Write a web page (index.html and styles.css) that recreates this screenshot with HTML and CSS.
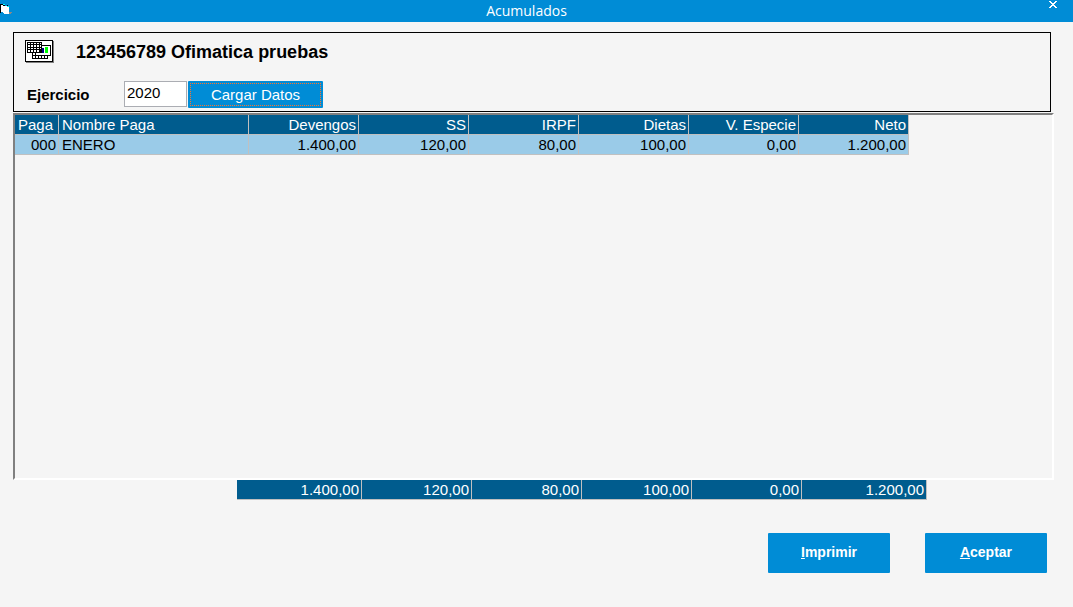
FILE: index.html
```html
<!DOCTYPE html>
<html lang="es">
<head>
<meta charset="utf-8">
<title>Acumulados</title>
<link rel="stylesheet" href="styles.css">
</head>
<body>
<header class="titlebar">
  <svg class="app-icon" width="12" height="11" viewBox="0 0 12 11" shape-rendering="crispEdges" aria-hidden="true">
    <path fill="#000" d="M0 0h3v1h-3zM0 1h1v8h-1zM3 1h2v1h-2zM7 1h1v1h-1z"/>
    <path fill="#0ff" d="M3 0h2v1h-2zM7 2h2v1h-2z"/>
    <path fill="#fff" d="M1 1h2v7h-2zM3 2h4v7h-4zM7 3h2v6h-2zM4 9h5v1h-5z"/>
    <path fill="#888" d="M9 8h3v1h-1v1h-2z"/>
  </svg>
  <h1 class="title">Acumulados</h1>
  <button class="close" type="button" aria-label="Cerrar">
    <svg width="9" height="7" viewBox="0 0 9 7" shape-rendering="crispEdges" aria-hidden="true">
      <path fill="#fff" d="M0 0h2v1h-2zM6 0h2v1h-2zM1 1h2v1h-2zM5 1h2v1h-2zM2 2h4v1h-4zM3 3h2v1h-2zM2 4h4v1h-4zM1 5h2v1h-2zM5 5h2v1h-2zM0 6h2v1h-2zM6 6h2v1h-2z"/>
    </svg>
  </button>
</header>
<main class="content">
  <form class="filter">
    <div class="company">
      <svg class="company-icon" width="29" height="23" viewBox="0 0 29 23" shape-rendering="crispEdges" aria-hidden="true">
        <path fill="#808080" d="M1 1h28v22h-28z"/>
        <path fill="#000" d="M0 0h28v22h-28z"/>
        <path fill="#fff" d="M1 1h26v20h-26z"/>
        <path fill="#000" d="M7 12h16v7h-16z"/>
        <path fill="#fff" d="M8 13h2v2h-2zM8 16h2v2h-2zM11 16h2v2h-2zM14 16h2v2h-2zM17 16h2v2h-2zM20 16h2v2h-2z"/>
        <path fill="#000" d="M10 5h16v11h-16z"/>
        <path fill="#fff" d="M11 6h14v9h-14z"/>
        <path fill="#000" d="M2 2h15v11h-15z"/>
        <path fill="#fff" d="M3 3h2v1h-2zM6 3h2v1h-2zM9 3h2v1h-2zM12 3h2v1h-2zM15 3h1v1h-1zM3 5h2v2h-2zM6 5h2v2h-2zM9 5h2v2h-2zM12 5h2v2h-2zM15 5h1v2h-1zM3 8h2v1h-2zM6 8h2v1h-2zM9 8h2v1h-2zM12 8h2v1h-2zM15 8h1v1h-1zM3 10h2v2h-2zM6 10h2v2h-2zM9 10h2v2h-2zM12 10h2v2h-2z"/>
        <path fill="#000080" d="M17 8h2v5h-2z"/>
        <path fill="#0f0" d="M20 7h3v6h-3z"/>
      </svg>
      <h2 class="company-name">123456789 Ofimatica pruebas</h2>
    </div>
    <div class="year">
      <label class="year-label" for="ejercicio">Ejercicio</label>
      <input class="year-input" id="ejercicio" type="text" value="2020">
      <button class="load" type="button"><span class="focus">Cargar Datos</span></button>
    </div>
  </form>
  <section class="grid">
    <table class="table">
      <colgroup><col class="col-code"><col class="col-name"><col class="col-num"><col class="col-num"><col class="col-num"><col class="col-num"><col class="col-num"><col class="col-num"></colgroup>
      <thead>
        <tr><th class="text">Paga</th><th class="text">Nombre Paga</th><th>Devengos</th><th>SS</th><th>IRPF</th><th>Dietas</th><th>V. Especie</th><th>Neto</th></tr>
      </thead>
      <tbody>
        <tr><td>000</td><td class="text">ENERO</td><td>1.400,00</td><td>120,00</td><td>80,00</td><td>100,00</td><td>0,00</td><td>1.200,00</td></tr>
      </tbody>
    </table>
  </section>
  <table class="table totals">
    <colgroup><col class="col-wide"><col class="col-num"><col class="col-num"><col class="col-num"><col class="col-num"><col class="col-wide"></colgroup>
    <tbody>
      <tr><td>1.400,00</td><td>120,00</td><td>80,00</td><td>100,00</td><td>0,00</td><td>1.200,00</td></tr>
    </tbody>
  </table>
  <footer class="actions">
    <button class="action" type="button"><u>I</u>mprimir</button>
    <button class="action" type="button"><u>A</u>ceptar</button>
  </footer>
</main>
</body>
</html>
```

FILE: styles.css
```css
* {
  box-sizing: border-box;
}

body {
  margin: 0;
  min-height: 100vh;
  display: flex;
  flex-direction: column;
  background: #f5f5f5;
  color: #000;
  font: 15px/19px "Liberation Sans", Arial, sans-serif;
}

button {
  border: 0;
  padding: 0;
  background: #008cd6;
  color: #fff;
  font: inherit;
}

.titlebar {
  display: flex;
  align-items: flex-start;
  height: 22px;
  padding-right: 15px;
  background: #008cd6;
  color: #fff;
}

.app-icon {
  margin-top: 4px;
}

.title {
  flex: 1;
  margin: 0;
  padding-right: 8px;
  font: 14px/22px "Open Sans", "Noto Sans", sans-serif;
  text-align: center;
}

.close {
  display: flex;
  padding-top: 1px;
}

.content {
  flex: 1;
  display: flex;
  flex-direction: column;
  padding: 10px 19px 34px 13px;
}

.filter {
  margin: 0 3px 1px 0;
  height: 80px;
  padding: 7px 11px 3px;
  border: 1px solid #000;
}

.company,
.year {
  display: flex;
  align-items: flex-start;
}

.company {
  gap: 22px;
  height: 41px;
}

.company-name {
  margin: 0;
  font-size: 18px;
  line-height: 24px;
}

.year-label {
  width: 99px;
  padding-left: 2px;
  font-weight: bold;
  line-height: 28px;
}

.year-input {
  width: 63px;
  height: 26px;
  margin-right: 1px;
  padding: 0 2px 3px;
  border: 1px solid #abadb3;
  background: #fff;
  color: #000;
  font: inherit;
}

.load {
  display: flex;
  width: 135px;
  height: 27px;
  padding: 2px;
  border-radius: 1px;
}

/* Crisp one-pixel dots, alternating along each edge */
.focus {
  flex: 1;
  padding: 1px;
  line-height: 22px;
  background:
    repeating-linear-gradient(90deg, #ff7329 0 1px, transparent 1px 2px) top / 100% 1px no-repeat,
    repeating-linear-gradient(90deg, #ff7329 0 1px, transparent 1px 2px) bottom / 100% 1px no-repeat,
    repeating-linear-gradient(180deg, #ff7329 0 1px, transparent 1px 2px) left / 1px 100% no-repeat,
    repeating-linear-gradient(180deg, #ff7329 0 1px, transparent 1px 2px) right / 1px 100% no-repeat;
}

.grid {
  flex: 1;
  border: 2px solid #fff;
  border-top-color: #808080;
  border-left-color: #808080;
}

.table {
  table-layout: fixed;
  width: 894px;
  border-spacing: 0;
}

.col-code { width: 44px; }
.col-name { width: 190px; }
.col-num { width: 110px; }
.col-wide { width: 125px; }

.table th,
.table td {
  height: 20px;
  padding: 0 2px;
  border: solid #c0c0c0;
  border-width: 0 1px 1px 0;
  font-weight: normal;
  text-align: right;
  white-space: nowrap;
}

.table th {
  background: #005c8e;
  color: #fff;
}

.table td {
  background: #9acbe8;
}

.table .text {
  padding-left: 3px;
  text-align: left;
}

.totals {
  width: 690px;
  margin-left: 224px;
}

.table.totals td {
  background: #005c8e;
  color: #fff;
}

.actions {
  display: flex;
  justify-content: flex-end;
  gap: 35px;
  margin-top: 33px;
  padding-right: 7px;
}

.action {
  width: 122px;
  height: 40px;
  padding-bottom: 2px;
  border-radius: 1px;
  font-size: 14px;
  font-weight: bold;
}
```
